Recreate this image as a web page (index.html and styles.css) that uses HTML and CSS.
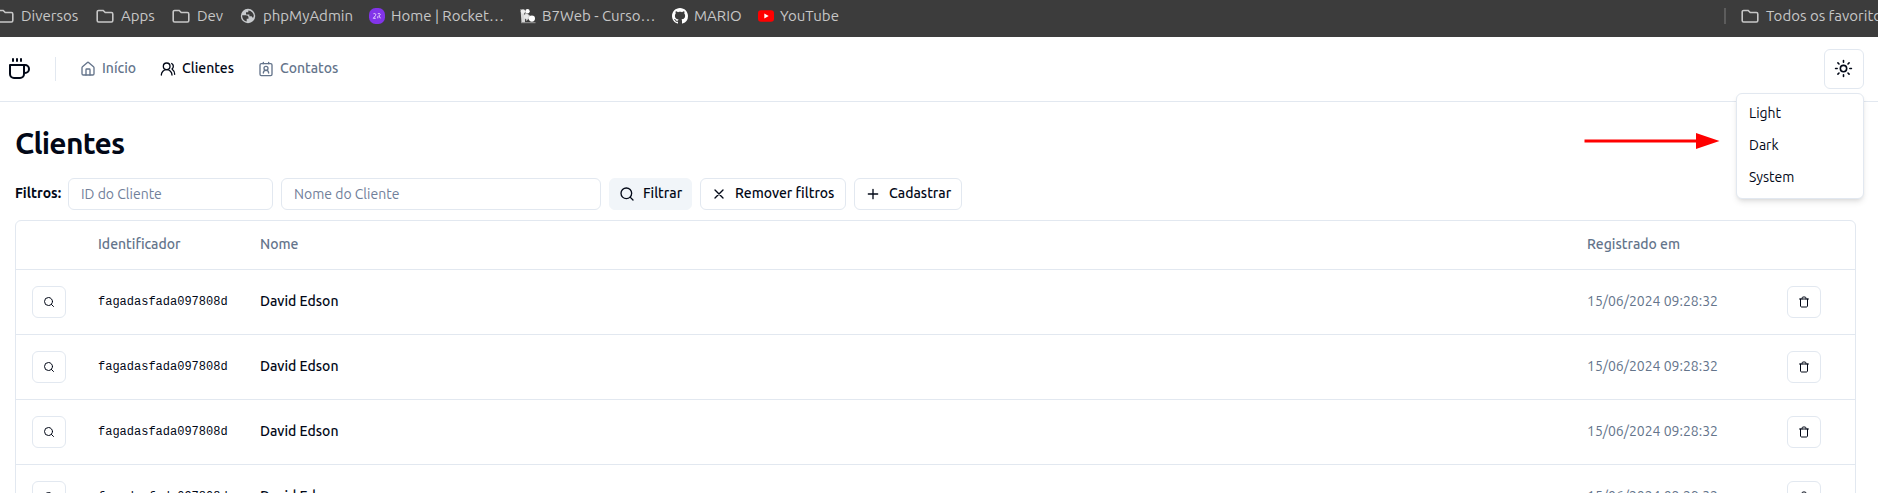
FILE: index.html
```html
<!DOCTYPE html>
<html lang="pt-BR">
<head>
<meta charset="utf-8">
<title>Clientes</title>
<link rel="stylesheet" href="styles.css">
</head>
<body>
<svg class="sprite" xmlns="http://www.w3.org/2000/svg">
  <symbol id="folder" viewBox="0 0 18 16"><path d="M2.600 2.500h4.600l2 2h6.200A1.400 1.400 0 0 1 16.800 5.900v6.700A1.400 1.400 0 0 1 15.400 14H2.600a1.400 1.400 0 0 1-1.400-1.400V3.900A1.400 1.400 0 0 1 2.600 2.500z"/></symbol>
  <symbol id="search" viewBox="0 0 24 24"><circle cx="11" cy="11" r="8"/><path d="m21 21-4.300-4.300"/></symbol>
  <symbol id="trash" viewBox="0 0 24 24"><path d="M3 6h18"/><path d="M19 6v14c0 1-1 2-2 2H7c-1 0-2-1-2-2V6"/><path d="M8 6V4c0-1 1-2 2-2h4c1 0 2 1 2 2v2"/></symbol>
</svg>

<div class="bookmarks">
  <a class="bookmark b1"><svg class="folder"><use href="#folder"/></svg><span>Diversos</span></a>
  <a class="bookmark b2"><svg class="folder"><use href="#folder"/></svg><span>Apps</span></a>
  <a class="bookmark b3"><svg class="folder"><use href="#folder"/></svg><span>Dev</span></a>
  <a class="bookmark b4"><svg class="favicon globe" viewBox="0 0 16 16"><circle cx="8" cy="8" r="7.200" fill="#c7cacd"/><path d="M2.200 7.200h3.600c1.700 0 2.700.9 2.700 2.300v1.200H6.700v2.900C4 13 2 10.500 2.200 7.200zM6 5.300V4.200h2.300V2.400c3.200.3 5.500 2.800 5.500 5.600l-.8 1.900-1.400-1.600H9.400V6.400H6z" fill="#3c3c3c"/></svg><span>phpMyAdmin</span></a>
  <a class="bookmark b5"><svg class="favicon" viewBox="0 0 16 16"><rect width="16" height="16" rx="6.500" fill="#8234e9"/><path d="M4.500 5.700c2-.5 2.800.5 2 1.900L4.300 10.300h2.400M8.800 5.700h2c1 .7.200 1.900-1 2.100l1.700 2.500M8.800 8.300v2" fill="none" stroke="#e6d6fb" stroke-width="1"/></svg><span>Home | Rocket…</span></a>
  <a class="bookmark b6"><svg class="favicon" viewBox="0 0 16 16"><path d="M.5 1l3 2 1.500 6v5.500H1.500z" fill="#d8d8d8"/><circle cx="7.500" cy="3.300" r="2.200" fill="#fff"/><circle cx="3" cy="3.500" r="2.200" fill="#eee"/><path d="M5 4l7 5-6 4z" fill="#bdbdbd"/><circle cx="6.300" cy="8.500" r="2.500" fill="#e8e8e8"/><circle cx="11.900" cy="10.600" r="3.100" fill="#fff"/><path d="M1 14.700h14.500" stroke="#999" stroke-width="1"/></svg><span>B7Web - Curso…</span></a>
  <a class="bookmark b7"><svg class="favicon" viewBox="0 0 16 16"><path fill="#fff" d="M8 0C3.580 0 0 3.580 0 8c0 3.540 2.290 6.530 5.470 7.590.4.070.55-.17.55-.38 0-.19-.01-.82-.01-1.490-2.010.37-2.530-.49-2.690-.94-.09-.23-.48-.94-.82-1.130-.28-.15-.68-.52-.01-.53.63-.01 1.080.58 1.230.82.72 1.210 1.870.87 2.330.66.07-.52.28-.87.51-1.070-1.780-.2-3.640-.89-3.640-3.950 0-.87.31-1.590.82-2.150-.08-.2-.36-1.020.08-2.120 0 0 .67-.21 2.200.82.64-.18 1.320-.27 2-.27s1.360.09 2 .27c1.530-1.040 2.200-.82 2.200-.82.44 1.100.16 1.920.08 2.120.51.56.82 1.270.82 2.150 0 3.070-1.870 3.750-3.650 3.950.29.25.54.73.54 1.480 0 1.070-.01 1.930-.01 2.200 0 .21.15.46.55.38A8.010 8.010 0 0 0 16 8c0-4.420-3.580-8-8-8z"/></svg><span>MARIO</span></a>
  <a class="bookmark b8"><svg class="favicon" viewBox="0 0 16 16"><rect y="2.300" width="16" height="11.400" rx="3" fill="#f00"/><path d="M6.300 5.600v4.800L10.700 8z" fill="#fff"/></svg><span>YouTube</span></a>
  <div class="all-bookmarks"><a class="bookmark b9"><svg class="folder"><use href="#folder"/></svg><span>Todos os favoritos</span></a></div>
</div>

<header class="topbar">
  <svg class="icon logo" viewBox="0 0 24 24"><path d="M17 8h1a4 4 0 1 1 0 8h-1"/><path d="M3 8h14v9a4 4 0 0 1-4 4H7a4 4 0 0 1-4-4Z"/><path d="M6 2v2M10 2v2M14 2v2"/></svg>
  <div class="separator"></div>
  <nav class="nav">
    <a class="nav-link n1"><svg class="icon i16" viewBox="0 0 24 24"><path d="M15 21v-8a1 1 0 0 0-1-1h-4a1 1 0 0 0-1 1v8"/><path d="M3 10a2 2 0 0 1 .709-1.528l7-5.999a2 2 0 0 1 2.582 0l7 5.999A2 2 0 0 1 21 10v9a2 2 0 0 1-2 2H5a2 2 0 0 1-2-2z"/></svg><span>Início</span></a>
    <a class="nav-link n2 active"><svg class="icon i16" viewBox="0 0 24 24"><path d="M18 21a8 8 0 0 0-16 0"/><circle cx="10" cy="8" r="5"/><path d="M22 20c0-3.370-2-6.500-4-8a5 5 0 0 0-.45-8.300"/></svg><span>Clientes</span></a>
    <a class="nav-link n3"><svg class="icon i16" viewBox="0 0 24 24"><path d="M16 18a4 4 0 0 0-8 0"/><circle cx="12" cy="11" r="3"/><rect width="18" height="18" x="3" y="4" rx="2"/><path d="M8 2v2M16 2v2"/></svg><span>Contatos</span></a>
  </nav>
  <div class="theme">
    <button class="btn theme-btn"><svg class="icon i19" viewBox="0 0 24 24"><circle cx="12" cy="12" r="4"/><path d="M12 2v2M12 20v2m-7.070-17.070 1.410 1.410m11.320 11.320 1.410 1.410M2 12h2m16 0h2M6.340 17.660l-1.410 1.410M19.070 4.930l-1.410 1.410"/></svg></button>
    <div class="menu">
      <div class="menu-item">Light</div>
      <div class="menu-item">Dark</div>
      <div class="menu-item">System</div>
    </div>
    <svg class="arrow" viewBox="0 0 136 16"><path d="M0.500 8h114" stroke="#f00" stroke-width="3"/><path d="M112 0l23.500 8L112 16z" fill="#f00"/></svg>
  </div>
</header>

<main class="content">
  <h1 class="title">Clientes</h1>
  <form class="filters">
    <span class="filters-label">Filtros:</span>
    <div class="input input-id"><span>ID do Cliente</span></div>
    <div class="input input-name"><span>Nome do Cliente</span></div>
    <button type="button" class="btn filter"><svg class="icon i16"><use href="#search"/></svg><span>Filtrar</span></button>
    <button type="button" class="btn clear"><svg class="icon i16" viewBox="0 0 24 24"><path d="M18 6 6 18M6 6l12 12"/></svg><span>Remover filtros</span></button>
    <button type="button" class="btn create"><svg class="icon i16" viewBox="0 0 24 24"><path d="M5 12h14M12 5v14"/></svg><span>Cadastrar</span></button>
  </form>
  <div class="table">
    <div class="row head"><span></span><span>Identificador</span><span>Nome</span><span>Registrado em</span><span></span></div>
    <div class="row"><button class="btn cell-btn"><svg class="icon i12"><use href="#search"/></svg></button><span class="mono">fagadasfada097808d</span><span class="name">David Edson</span><span class="date">15/06/2024 09:28:32</span><button class="btn cell-btn"><svg class="icon i12"><use href="#trash"/></svg></button></div>
    <div class="row"><button class="btn cell-btn"><svg class="icon i12"><use href="#search"/></svg></button><span class="mono">fagadasfada097808d</span><span class="name">David Edson</span><span class="date">15/06/2024 09:28:32</span><button class="btn cell-btn"><svg class="icon i12"><use href="#trash"/></svg></button></div>
    <div class="row"><button class="btn cell-btn"><svg class="icon i12"><use href="#search"/></svg></button><span class="mono">fagadasfada097808d</span><span class="name">David Edson</span><span class="date">15/06/2024 09:28:32</span><button class="btn cell-btn"><svg class="icon i12"><use href="#trash"/></svg></button></div>
    <div class="row"><button class="btn cell-btn"><svg class="icon i12"><use href="#search"/></svg></button><span class="mono">fagadasfada097808d</span><span class="name">David Edson</span><span class="date">15/06/2024 09:28:32</span><button class="btn cell-btn"><svg class="icon i12"><use href="#trash"/></svg></button></div>
  </div>
</main>
</body>
</html>
```
FILE: styles.css
```css
* { box-sizing: border-box; }
html, body { margin: 0; height: 493px; overflow: hidden; }
body {
  display: flex;
  flex-direction: column;
  background: #fff;
  color: #020817;
  font: 14px/20px Ubuntu, "Noto Sans", "Open Sans", sans-serif;
}
span { white-space: nowrap; }
.sprite { position: absolute; width: 0; height: 0; }
.icon { fill: none; stroke: currentColor; stroke-width: 2; stroke-linecap: round; stroke-linejoin: round; flex: none; }
.i12 { width: 12px; height: 12px; }
.i16 { width: 16px; height: 16px; }
.i19 { width: 19px; height: 19px; }

.bookmarks { display: flex; flex: none; height: 37px; padding-bottom: 5px; background: #3c3c3c; color: #c7c7c7; font-size: 15px; overflow: hidden; }
.bookmark { display: flex; flex: none; align-items: center; gap: 6px; }
.favicon { width: 16px; height: 16px; }
.globe { margin-left: -1px; margin-right: 1px; }
.folder { width: 18px; height: 16px; fill: none; stroke: #c7c7c7; stroke-width: 1.600; }
.b1 { width: 100px; margin-left: -4px; gap: 7px; }
.b2 { width: 76px; gap: 7px; }
.b3 { width: 69px; gap: 7px; }
.b4 { width: 128px; }
.b5 { width: 151px; }
.b6 { width: 152px; }
.b7 { width: 86px; }
.b8 { width: 90px; }
.b9 { margin-left: -1px; gap: 7px; }
.all-bookmarks { display: flex; flex: none; align-self: center; align-items: center; width: 154px; height: 16px; margin-left: auto; padding-left: 16px; border-left: 2px solid #5c5c5c; }

.topbar { display: flex; flex: none; align-items: center; height: 65px; padding: 0 14px 1px 7px; border-bottom: 1px solid #e2e8f0; }
.logo { width: 24px; height: 24px; }
.separator { width: 1px; height: 24px; margin: 0 24px; background: #e2e8f0; }
.nav { display: flex; color: #64748b; font-weight: 500; }
.nav-link { display: flex; align-items: center; gap: 6px; }
.nav-link .icon { margin-top: 1px; }
.nav-link span { margin-bottom: 2px; }
.n1 { width: 80px; }
.n2 { width: 98px; }
.active { color: #020817; }
.btn { display: flex; align-items: center; justify-content: center; padding: 0; background: #fff; border: 1px solid #e2e8f0; border-radius: 6px; color: #020817; font: inherit; font-weight: 500; }
.theme { position: relative; margin-left: auto; }
.theme-btn { width: 40px; height: 40px; padding-right: 1px; }
.menu { position: absolute; z-index: 2; top: 44px; right: 0; width: 128px; height: 106px; padding: 4px; background: #fff; border: 1px solid #e2e8f0; border-radius: 6px; box-shadow: 0 4px 6px -1px rgb(0 0 0 / .1), 0 2px 4px -2px rgb(0 0 0 / .1); }
.menu-item { height: 32px; padding: 5px 8px 7px; }
.arrow { position: absolute; top: 84px; right: 144px; width: 136px; height: 16px; }

.content { flex: 1; min-height: 0; overflow: hidden; padding: 23px 22px 0 15px; }
.title { margin: 0; font-size: 30px; line-height: 36px; font-weight: 600; letter-spacing: -0.75px; }
.filters { display: flex; align-items: center; height: 32px; margin-top: 17px; }
.filters-label { width: 53px; font-weight: 600; margin-bottom: 2px; }
.input { height: 32px; padding: 5px 12px; border: 1px solid #e2e8f0; border-radius: 6px; color: #71809a; }
.input-id { width: 205px; margin-right: 8px; }
.input-name { width: 320px; margin-right: 8px; }
.filters .btn { height: 32px; gap: 8px; justify-content: flex-start; padding: 0 0 0 10px; margin-right: 8px; }
.filters .btn span { margin-bottom: 2px; }
.filters .filter { width: 83px; background: #f1f5f9; border-color: #f1f5f9; padding-left: 9px; }
.filters .clear { width: 146px; }
.filters .create { width: 108px; }

.table { margin-top: 10px; border: 1px solid #e2e8f0; border-radius: 6px; height: 400px; }
.row { display: grid; grid-template-columns: 66px 162px 1fr 200px 68px; align-items: center; height: 65px; padding-left: 16px; border-bottom: 1px solid #e2e8f0; }
.head { height: 49px; color: #64748b; font-weight: 500; }
.head span, .name, .date { margin-bottom: 2px; }
.cell-btn { width: 34px; height: 32px; }
.mono { font: 12px/16px "Liberation Mono", monospace; }
.name { font-weight: 500; }
.date { color: #64748b; }
```
